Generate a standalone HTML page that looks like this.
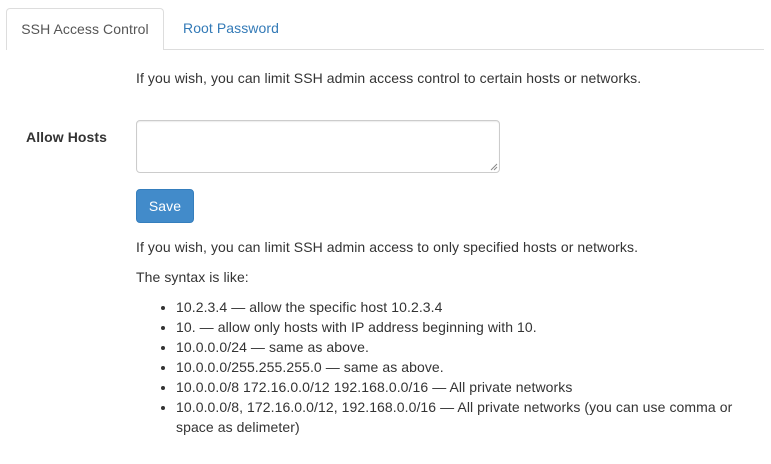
<!DOCTYPE html>
<html><head><style>
body{margin:0;background:#fff;font-family:"Liberation Sans",Helvetica,Arial,sans-serif;font-size:14px;line-height:20px;color:#333;width:771px;height:464px;overflow:hidden;position:relative;letter-spacing:0.08px}
.a{position:absolute}
.tabline{left:6px;top:49px;width:758px;height:1px;background:#ddd}
.tab{left:6px;top:8px;width:156px;height:41px;border:1px solid #ddd;border-bottom:none;border-radius:4px 4px 0 0;background:#fff;text-align:center;line-height:41px;color:#555}
.tab2{left:183px;top:8px;line-height:41px;color:#337ab7}
p{margin:0}
ul{margin:0;padding-left:40px}
</style></head><body>
<div class="a tabline"></div>
<div class="a tab">SSH Access Control</div>
<div class="a tab2">Root Password</div>
<p class="a" style="left:136px;top:68px">If you wish, you can limit SSH admin access control to certain hosts or networks.</p>
<div class="a" style="left:26px;top:127px;font-weight:bold">Allow Hosts</div>
<div class="a" style="left:136px;top:120px;width:362px;height:51px;border:1px solid #ccc;border-radius:4px;box-shadow:inset 0 1px 1px rgba(0,0,0,.075)"></div>
<svg class="a" style="left:490px;top:163px" width="8" height="8"><path d="M1 7L7 1M4 7L7 4" stroke="#888" stroke-width="1"/></svg>
<div class="a" style="left:136px;top:189px;width:56px;height:32px;background:#428bca;border:1px solid #357ebd;border-radius:4px;color:#fff;text-align:center;line-height:32px">Save</div>
<p class="a" style="left:136px;top:237px">If you wish, you can limit SSH admin access to only specified hosts or networks.</p>
<p class="a" style="left:136px;top:267px">The syntax is like:</p>
<ul class="a" style="left:136px;top:297px;width:620px">
<li>10.2.3.4 — allow the specific host 10.2.3.4</li>
<li>10. — allow only hosts with IP address beginning with 10.</li>
<li>10.0.0.0/24 — same as above.</li>
<li>10.0.0.0/255.255.255.0 — same as above.</li>
<li>10.0.0.0/8 172.16.0.0/12 192.168.0.0/16 — All private networks</li>
<li>10.0.0.0/8, 172.16.0.0/12, 192.168.0.0/16 — All private networks (you can use comma or<br>space as delimeter)</li>
</ul>
</body></html>
